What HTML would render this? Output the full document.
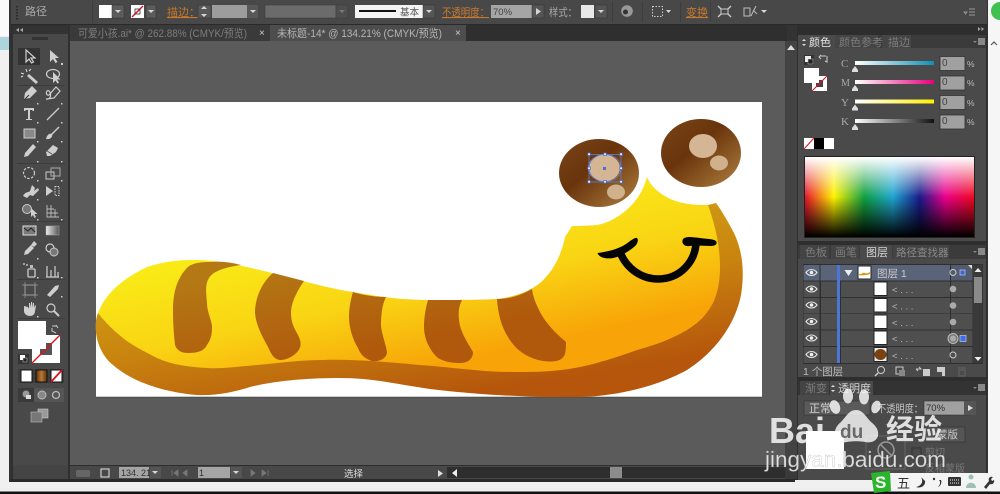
<!DOCTYPE html>
<html>
<head>
<meta charset="utf-8">
<style>
html,body{margin:0;padding:0;width:1000px;height:494px;overflow:hidden;background:#eee}
svg{display:block;filter:blur(.35px)}
text{font-family:"Liberation Sans","Noto Sans CJK SC",sans-serif;font-size:10px;fill:#c4c4c4}
.o{fill:#c9792c;font-size:11px;text-decoration:underline}
.t{fill:#aaa;font-size:11px}
.d{fill:#7d7d7d;font-size:11px}
.a{fill:#d2d2d2;font-size:11px}
.ic{fill:none;stroke:#cfcfcf;stroke-width:1.2}
.if{fill:#cfcfcf;stroke:none}
.ar{fill:#d5d5d5}
</style>
</head>
<body>
<svg width="1000" height="494" viewBox="0 0 1000 494" xmlns="http://www.w3.org/2000/svg">
<defs>
<linearGradient id="gy" gradientUnits="userSpaceOnUse" x1="340" y1="215" x2="375" y2="378"><stop offset="0" stop-color="#f9ee17"/><stop offset=".55" stop-color="#f9d414"/><stop offset="1" stop-color="#f8a408"/></linearGradient>
<linearGradient id="go" gradientUnits="userSpaceOnUse" x1="400" y1="215" x2="430" y2="400"><stop offset="0" stop-color="#d0a316"/><stop offset=".5" stop-color="#c9850f"/><stop offset="1" stop-color="#b5560c"/></linearGradient>
<linearGradient id="gs" gradientUnits="userSpaceOnUse" x1="300" y1="262" x2="320" y2="362"><stop offset="0" stop-color="#b47814"/><stop offset="1" stop-color="#b0580c"/></linearGradient>
<linearGradient id="ge1" x1="0" y1="0" x2="1" y2="1"><stop offset="0" stop-color="#7a4517"/><stop offset=".42" stop-color="#69340c"/><stop offset="1" stop-color="#b08040"/></linearGradient>
<linearGradient id="hue" x1="0" x2="1" y1="0" y2="0"><stop offset="0" stop-color="#e8112d"/><stop offset=".17" stop-color="#fff200"/><stop offset=".35" stop-color="#10a040"/><stop offset=".52" stop-color="#1fa5d0"/><stop offset=".68" stop-color="#1a1a8a"/><stop offset=".83" stop-color="#ec008c"/><stop offset="1" stop-color="#ee0a20"/></linearGradient>
<linearGradient id="wh" x1="0" x2="0" y1="0" y2="1"><stop offset="0" stop-color="#fff"/><stop offset=".5" stop-color="#fff" stop-opacity="0"/><stop offset=".5" stop-color="#000" stop-opacity="0"/><stop offset="1" stop-color="#000"/></linearGradient>
<linearGradient id="sc" x1="0" x2="1"><stop offset="0" stop-color="#fff"/><stop offset="1" stop-color="#0f8fb5"/></linearGradient>
<linearGradient id="sm" x1="0" x2="1"><stop offset="0" stop-color="#fff"/><stop offset="1" stop-color="#e6007e"/></linearGradient>
<linearGradient id="sy" x1="0" x2="1"><stop offset="0" stop-color="#fff"/><stop offset="1" stop-color="#fff000"/></linearGradient>
<linearGradient id="sk" x1="0" x2="1"><stop offset="0" stop-color="#fff"/><stop offset="1" stop-color="#111"/></linearGradient>
<linearGradient id="br" x1="0" x2="1"><stop offset="0" stop-color="#5c2f0c"/><stop offset=".5" stop-color="#b87a34"/><stop offset="1" stop-color="#5c2f0c"/></linearGradient>
<linearGradient id="tb" x1="0" x2="1" y1="0" y2="0"><stop offset="0" stop-color="#eee"/><stop offset="1" stop-color="#555"/></linearGradient>
</defs>

<!-- outside window -->
<rect width="1000" height="494" fill="#f0f0f0"/>
<rect x="0" y="0" width="10" height="36" fill="#fafafa"/>
<rect x="0" y="37" width="9" height="13" fill="#aed4de"/>
<rect x="988" y="0" width="12" height="494" fill="#f6f6f6"/>
<circle cx="1000" cy="11" r="9" fill="#3fc04f"/>
<path d="M991 45l3-3 3 3" fill="none" stroke="#555" stroke-width="1.2"/>
<rect x="0" y="491.500" width="1000" height="2.500" fill="#111"/>

<!-- window -->
<rect x="9" y="0" width="979" height="482" fill="#333"/>
<rect x="11" y="0" width="976" height="24" fill="#484848"/>
<rect x="11" y="24" width="976" height="1" fill="#2a2a2a"/>

<!-- top toolbar -->
<path d="M17 6v14" stroke="#222" stroke-width="1.5" stroke-dasharray="1.5 1.5"/>
<text x="25" y="15" class="t">路径</text>
<rect x="92" y="1" width="1" height="22" fill="#3d3d3d"/>
<rect x="99" y="5" width="13" height="13" fill="#fff"/>
<rect x="112" y="5" width="12" height="13" fill="#5c5c5c" stroke="#333" stroke-width=".5"/><path d="M115 10h6l-3 3z" class="ar"/>
<rect x="131" y="5" width="13" height="13" fill="#fff"/><path d="M132 17l11-11" stroke="#e01020" stroke-width="1.4"/><rect x="135" y="9" width="5" height="5" fill="none" stroke="#333" stroke-width=".8"/>
<rect x="146" y="5" width="10" height="13" fill="#5c5c5c" stroke="#333" stroke-width=".5"/><path d="M148 10h6l-3 3z" class="ar"/>
<text x="167" y="16" class="o">描边：</text>
<rect x="198" y="5" width="13" height="13" fill="#585858" stroke="#333" stroke-width=".5"/><path d="M201 9h6l-3-3zM201 14h6l-3 3z" class="ar"/>
<rect x="212" y="5" width="35" height="13" fill="#9c9c9c"/>
<rect x="247" y="5" width="11" height="13" fill="#585858"/><path d="M250 10h6l-3 3z" class="ar"/>
<rect x="265" y="5" width="71" height="13" fill="#6b6b6b" stroke="#3a3a3a" stroke-width=".5"/>
<rect x="336" y="5" width="12" height="13" fill="#4e4e4e" stroke="#3a3a3a" stroke-width=".5"/><path d="M339 10h6l-3 3z" fill="#777"/>
<rect x="355" y="5" width="68" height="13" fill="#f4f4f4"/><rect x="359" y="10" width="37" height="2" fill="#111"/>
<text x="400" y="15.500" style="font-size:9.500px;fill:#555">基本</text>
<rect x="423" y="5" width="12" height="13" fill="#555" stroke="#333" stroke-width=".5"/><path d="M426 10h6l-3 3z" class="ar"/>
<text x="442" y="16" class="o" textLength="47" lengthAdjust="spacingAndGlyphs">不透明度：</text>
<rect x="491" y="5" width="41" height="13" fill="#a5a5a5"/><text x="493" y="15" style="font-size:9.500px;fill:#444">70%</text>
<rect x="532" y="5" width="12" height="13" fill="#555" stroke="#333" stroke-width=".5"/><path d="M536 8l5 3.500-5 3.500z" class="ar"/>
<text x="549" y="16" class="t" textLength="28" lengthAdjust="spacingAndGlyphs">样式：</text>
<rect x="581" y="5" width="13" height="13" fill="#e8e8e8"/><rect x="595" y="5" width="12" height="13" fill="#555" stroke="#333" stroke-width=".5"/><path d="M598 10h6l-3 3z" class="ar"/>
<rect x="612" y="2" width="1" height="20" fill="#3d3d3d"/>
<circle cx="627" cy="11" r="5.800" fill="#999"/><circle cx="625.500" cy="12" r="2.500" fill="#333"/>
<rect x="642" y="2" width="1" height="20" fill="#3d3d3d"/>
<rect x="652.500" y="6.500" width="10" height="10" fill="none" stroke="#ccc" stroke-dasharray="1.500 1.500"/><path d="M666 10h5l-2.500 3z" class="ar"/>
<rect x="680" y="2" width="1" height="20" fill="#3d3d3d"/>
<text x="686" y="16" class="o">变换</text>
<rect x="710" y="2" width="1" height="20" fill="#3d3d3d"/>
<path d="M718 6l3 3M731 6l-3 3M718 17l3-3M731 17l-3-3" stroke="#ccc" fill="none" stroke-width="1.300"/><rect x="721" y="9" width="7" height="5" fill="none" stroke="#ccc"/>
<path d="M744 8h6v8h-6zM751 16l5-10M753 10l4 4" stroke="#bbb" fill="none"/><path d="M761 10h6l-3 3z" class="ar"/>
<path d="M964 12h3l-1.500 2zM969 9h6M969 12h6M969 15h6" stroke="#999" stroke-width=".9" fill="none"/>

<!-- tab strip -->
<rect x="70" y="25" width="717" height="16" fill="#2f2f2f"/>
<rect x="70" y="25" width="200" height="16" fill="#3a3a3a"/>
<rect x="270" y="25" width="196" height="16" fill="#4d4d4d"/>
<text x="78" y="37" class="d" textLength="169" lengthAdjust="spacingAndGlyphs">可爱小孩.ai* @ 262.88% (CMYK/预览)</text>
<text x="259" y="36" style="font-size:10px;fill:#ccc">×</text>
<text x="277" y="37" style="font-size:11px;fill:#b5b5b5" textLength="165" lengthAdjust="spacingAndGlyphs">未标题-14* @ 134.21% (CMYK/预览)</text>
<text x="455" y="36" style="font-size:10px;fill:#ccc">×</text>

<!-- doc -->
<rect x="70" y="41" width="717" height="425" fill="#5b5b5b"/>
<rect x="785" y="41" width="12" height="425" fill="#434343"/>
<path d="M787 50l4-5 4 5z" fill="#ddd"/>
<rect x="96" y="102" width="666" height="295" fill="#fff"/>
<rect x="96" y="396.500" width="666" height="1" fill="#333" opacity=".5"/>

<!-- caterpillar -->
<path fill="url(#go)" d="M98 313C96 318 95 325 96 332C97 345 104 358 113 365C130 380 160 392 197 395C215 396 235 392 250 387C270 382 300 378 340 378C375 378 400 385 430 389C470 394 530 398 580 397C620 396 660 385 687 370C715 352 735 325 741 295C745 270 742 250 734 233C728 222 722 211 716 203L708 205L690 300L400 340L200 340Z"/>
<path fill="url(#gy)" d="M98 313C105 295 120 280 147 267C165 261 180 260 195 260C225 260 260 270 303 281C325 287 345 291 353 292C375 296 400 300 430 300C450 300 480 300 497 299C515 297 535 290 545 278C555 268 562 252 565 237L572 226C585 226 597 225 597 225C615 222 640 205 647 177C652 190 668 200 683 203C692 205 700 205 708 205C715 225 720 245 720 267C720 285 716 297 713 303C705 318 695 325 687 330C670 340 655 345 637 350C615 358 595 364 580 367C555 372 535 372 513 372C480 372 450 367 420 365C390 362 350 359 323 360C300 360 280 363 257 365C235 367 220 369 207 368C190 367 172 365 157 358C145 352 133 346 123 338C113 330 105 322 98 313Z"/>
<g fill="url(#gs)">
<path d="M241 265C230 262 220 261 210 262C197 262 190 264 186 269C176 280 173 295 173 310C173 325 174 335 175 345C177 351 182 353 188 353C198 353 204 351 207 345C212 338 212 332 212 326C211 318 207 312 207 303C206 292 205 284 209 278C213 271 226 267 241 265Z"/>
<path d="M273 273C262 282 255 298 255 313C256 325 262 336 268 347C271 353 273 359 280 360C288 360 295 355 298 351C302 346 301 341 298 335C294 328 291 322 291 313C291 303 297 291 304 281Z"/>
<path d="M353 292C350 302 349 310 349 317C349 328 353 340 358 348C361 356 366 359 372 361C380 362 387 358 387 352C386 345 382 335 381 326C381 315 382 305 386 297C375 297 362 295 353 292Z"/>
<path d="M428 300C425 310 424 320 424 327C424 340 431 352 438 358C445 362 452 363 460 363C469 363 473 358 473 352C468 343 460 332 459 320C458 312 459 306 462 300Z"/>
<path d="M497 299C498 313 501 326 508 337C515 349 526 358 543 361C553 362 562 362 565 354C566 349 566 345 566 342C555 333 545 322 540 312C536 304 533 297 532 289C520 296 508 299 497 299Z"/>
</g>
<!-- eyes -->
<ellipse cx="599" cy="173" rx="40" ry="34" fill="url(#ge1)"/>
<ellipse cx="701" cy="153" rx="40" ry="34" fill="url(#ge1)"/>
<ellipse cx="604" cy="168" rx="16" ry="13.500" fill="#d4b695"/>
<ellipse cx="616" cy="192" rx="9" ry="7.500" fill="#d1b08c"/>
<ellipse cx="703" cy="146" rx="14" ry="12" fill="#d4b695"/>
<ellipse cx="719" cy="163" rx="9" ry="7.500" fill="#d1b08c"/>
<!-- selection -->
<g fill="none" stroke="#5b7fd8" stroke-width=".8"><rect x="589" y="154.500" width="32" height="27.500"/><ellipse cx="605" cy="168" rx="16" ry="13.700"/></g>
<g fill="#fff" stroke="#4a6fd0" stroke-width=".8"><rect x="587.800" y="153" width="2.500" height="2.500"/><rect x="603.800" y="153" width="2.500" height="2.500"/><rect x="619.800" y="153" width="2.500" height="2.500"/><rect x="587.800" y="167" width="2.500" height="2.500"/><rect x="619.800" y="167" width="2.500" height="2.500"/><rect x="587.800" y="180.500" width="2.500" height="2.500"/><rect x="603.800" y="180.500" width="2.500" height="2.500"/><rect x="619.800" y="180.500" width="2.500" height="2.500"/></g>
<rect x="603" y="167" width="3" height="3" fill="#4a6fd0"/>
<!-- smile -->
<path d="M620 252C627 270 643 279 658 279C680 279 695 262 696 243" fill="none" stroke="#050505" stroke-width="7.500"/>
<path d="M597.500 253C605 252 617 250 626 244C630 241 635 237 637 238C639 240 637 245 634 247C628 252 622 255 617 257C608 260 599 258 597.500 253Z" fill="#050505"/>
<path d="M683 239C686 236 692 237 700 238C707 239 714 239 716 241C718 244 715 246 711 246C704 246 696 245 690 246C684 247 681 243 683 239Z" fill="#050505"/>

<!-- tools panel -->
<rect x="11" y="25" width="59" height="457" fill="#303030"/>
<rect x="13" y="34" width="55" height="431" fill="#494949"/>
<rect x="13" y="465" width="55" height="14" fill="#444"/>
<rect x="13" y="26" width="55" height="8" fill="#333"/>
<path d="M16 30l3-2v4zM20 30l3-2v4z" fill="#aaa"/>
<rect x="32" y="37" width="16" height="3" fill="#333"/>
<rect x="18" y="48" width="22" height="17" fill="#333"/>
<g>
<path class="ic" d="M26 50v12l3-3 2.500 4 2-1-2.500-4h4z"/>
<path class="if" d="M50 50v12l3-3 2.500 4 2-1-2.500-4h4z"/><rect x="61" y="63" width="2" height="2" fill="#ccc"/>
<path class="if" d="M36 84l-9-8 2-2 9 8z"/><path d="M27 72l-1-3M24 74l-3-1M29 71l2-2M23 76l-2 1" stroke="#ddd"/>
<ellipse cx="53" cy="74" rx="6.500" ry="4.500" class="ic"/><path class="if" d="M53 72v11l2.500-2.500 2 3 1.500-1-2-3h3.500z"/>
<path class="if" d="M24 99l1-6 7-7 5 5-7 7z"/><path d="M24 100l5-5" stroke="#333"/>
<path class="ic" d="M46 99c6 1 5-7 3-8-3-2-4 5 0 4l7-8 4 4-6 7-7 1"/>
<path class="if" d="M24 108h10v3h-1l-1-1h-2v9h2v1h-6v-1h2v-9h-2l-1 1h-1z"/>
<path d="M47 120l12-12" stroke="#ccc" stroke-width="1.300"/>
<rect x="24" y="129" width="11" height="9" fill="#8a8a8a" stroke="#ccc"/>
<path d="M59 127l-8 8" stroke="#ccc" stroke-width="1.500"/><path class="if" d="M46 139c1-4 3-6 6-5 1 2-1 6-6 5z"/>
<path class="if" d="M24 157l1-4 8-9 3 3-8 9z"/>
<path class="if" d="M46 152l7-7 5 3-2 4-6 4h-3z"/><path d="M47 151l5 3" stroke="#555"/>
<circle cx="29" cy="173" r="5.500" fill="none" stroke="#ccc" stroke-width="1.200" stroke-dasharray="2.500 1.500"/>
<rect x="46" y="172" width="8" height="7" fill="none" stroke="#ccc"/><rect x="51" y="168" width="9" height="8" fill="none" stroke="#aaa"/>
<path class="if" d="M23 196c3-5 5-3 7-5l2-6 3 3-1 3 4-3 1 2-6 6-3-1-3 3z"/>
<path class="if" d="M46 186l7 5-7 5z"/><rect x="55" y="186.500" width="4" height="9" fill="none" stroke="#ccc" stroke-dasharray="1.500 1"/>
<circle cx="27" cy="209" r="4.500" fill="#777" stroke="#ccc"/><path class="if" d="M31 208v9l2-2 1.500 3 1.500-1-1.500-3h3z"/>
<path d="M47 205v12h12M47 209h7M47 213h11M51 205v12M55 209v8" stroke="#bbb" fill="none" stroke-width=".9"/>
<rect x="23" y="226" width="13" height="9" fill="#7a7a7a" stroke="#ddd"/><path d="M24 228l4 3 3-3 4 4" stroke="#222" fill="none"/>
<rect x="46" y="226" width="13" height="9" fill="url(#tb)" stroke="#aaa" stroke-width=".5"/>
<path class="if" d="M24 255l1-4 6-6 3 3-6 6zM31 245l3-4 3 3-3 3z"/>
<circle cx="50" cy="248" r="4" class="ic"/><circle cx="54" cy="252" r="4" fill="#777" stroke="#ccc"/>
<rect x="28" y="269" width="7" height="8" rx="1" fill="none" stroke="#ccc" stroke-width="1.300"/><rect x="30" y="265" width="3" height="3" fill="#bbb"/><circle cx="24" cy="264" r="1" fill="#bbb"/><circle cx="27" cy="265" r="1" fill="#bbb"/>
<path d="M47 266v11M51 270v7M55 266v11M58 272v5M46 277h13" stroke="#ccc" stroke-width="1.200"/>
<rect x="25" y="285" width="10" height="10" fill="none" stroke="#aaa"/><path d="M25 282v16M35 282v16M22 285h16M22 295h16" stroke="#999" stroke-width=".7"/>
<path class="if" d="M47 295l8-9 4-1-1 4-8 8z"/>
<path class="if" d="M24 306v5c0 3 3 5 6 5s5-2 5-5l1-5-1-1-1 3v-5h-1v5l-1-6h-1v6l-1-5h-1v6l-1-2z"/>
<circle cx="51" cy="308" r="4" class="ic" stroke-width="1.500"/><path d="M54 311l5 5" stroke="#ccc" stroke-width="2"/>
</g>
<g fill="#ccc"><rect x="37" y="103" width="1.500" height="1.500"/><rect x="61" y="103" width="1.500" height="1.500"/><rect x="37" y="122" width="1.500" height="1.500"/><rect x="61" y="122" width="1.500" height="1.500"/><rect x="37" y="141" width="1.500" height="1.500"/><rect x="61" y="141" width="1.500" height="1.500"/><rect x="37" y="161" width="1.500" height="1.500"/><rect x="61" y="161" width="1.500" height="1.500"/><rect x="37" y="180" width="1.500" height="1.500"/><rect x="61" y="180" width="1.500" height="1.500"/><rect x="37" y="199" width="1.500" height="1.500"/><rect x="37" y="219" width="1.500" height="1.500"/><rect x="61" y="219" width="1.500" height="1.500"/><rect x="37" y="258" width="1.500" height="1.500"/><rect x="37" y="277" width="1.500" height="1.500"/><rect x="61" y="277" width="1.500" height="1.500"/><rect x="61" y="296" width="1.500" height="1.500"/><rect x="37" y="316" width="1.500" height="1.500"/></g>
<g fill="#3c3c3c"><rect x="17" y="85" width="48" height="1"/><rect x="17" y="163" width="48" height="1"/><rect x="17" y="221" width="48" height="1"/><rect x="17" y="279" width="48" height="1"/><rect x="17" y="318" width="48" height="1"/></g>
<!-- fill / stroke -->
<rect x="32" y="335" width="28" height="28" fill="#fff"/><rect x="40" y="343" width="12" height="12" fill="#555"/>
<path d="M32 363l28-28" stroke="#e01020" stroke-width="1.300"/>
<rect x="18" y="321" width="28" height="28" fill="#fff"/>
<path d="M52 326h5M58 328l-2-3M52 328v3l4 2" stroke="#ccc" fill="none"/>
<rect x="18" y="354" width="11" height="10" fill="#333"/><rect x="20" y="355" width="5" height="5" fill="#fff"/><rect x="23" y="358" width="4" height="4" fill="#222" stroke="#ccc" stroke-width=".5"/>
<rect x="18" y="369" width="46" height="14" fill="#3e3e3e"/>
<rect x="21" y="370" width="11" height="12" fill="#fff" stroke="#111"/>
<rect x="36" y="370" width="11" height="12" fill="url(#br)" stroke="#111"/>
<rect x="51" y="370" width="11" height="12" fill="#fff" stroke="#111"/><path d="M51 382l11-12" stroke="#e01020" stroke-width="1.800"/>
<rect x="18" y="388" width="46" height="14" fill="#555"/><rect x="18" y="388" width="16" height="14" fill="#3a3a3a"/>
<circle cx="26" cy="394" r="3.500" fill="#999"/><rect x="26" y="395" width="5" height="4" fill="#ddd"/>
<circle cx="42" cy="395" r="4" fill="#888" stroke="#bbb"/><circle cx="56" cy="395" r="3.500" fill="none" stroke="#bbb" stroke-width="1.300"/>
<rect x="38" y="409" width="10" height="9" fill="#999" stroke="#ccc" stroke-width=".6"/><rect x="31" y="412" width="11" height="10" fill="#777" stroke="#bbb" stroke-width=".6"/>

<!-- status bar -->
<rect x="70" y="466" width="717" height="13" fill="#484848"/>
<rect x="70" y="465" width="717" height="1" fill="#2e2e2e"/>
<rect x="10" y="479" width="788" height="3" fill="#2a2a2a"/>
<rect x="76" y="470" width="14" height="7" rx="1.500" fill="#666"/>
<rect x="101" y="469" width="8" height="8" fill="none" stroke="#ccc" stroke-width="1.200"/>
<rect x="119" y="467" width="30" height="11" fill="#a5a5a5"/><text x="121" y="476" style="font-size:9px;fill:#333">134. 21</text>
<rect x="150" y="467" width="11" height="11" fill="#555"/><path d="M152 471h6l-3 3z" class="ar"/>
<path d="M172 470v6M178 470l-4 3 4 3zM187 470l-4 3 4 3z" fill="#777" stroke="#777" stroke-width=".8"/>
<rect x="198" y="467" width="32" height="11" fill="#a5a5a5"/><text x="199" y="476" style="font-size:9px;fill:#333">1</text>
<rect x="231" y="467" width="11" height="11" fill="#555"/><path d="M233 471h6l-3 3z" class="ar"/>
<path d="M251 470l4 3-4 3zM262 470l4 3-4 3zM268 470v6" fill="#777" stroke="#777" stroke-width=".8"/>
<text x="344" y="477" style="font-size:9.500px;fill:#ddd">选择</text>
<path d="M438 470l5 3.500-5 3.500z" fill="#ddd"/>
<rect x="447" y="467" width="340" height="11" fill="#2e2e2e"/>
<path d="M457 469v8l-5-4z" fill="#eee"/>
<rect x="610" y="467" width="12" height="11" fill="#8c8c8c"/>
<rect x="785" y="466" width="13" height="13" fill="#3a3a3a"/>

<!-- right panels -->
<rect x="797" y="25" width="190" height="457" fill="#2e2e2e"/>
<path d="M978 27l2.500 2-2.500 2zM981.500 27l2.500 2-2.500 2z" fill="#aaa"/>
<rect x="798" y="35" width="188" height="206" fill="#4a4a4a"/>
<rect x="798" y="35" width="188" height="13" fill="#3b3b3b"/>
<rect x="798" y="35" width="37" height="14" fill="#4a4a4a"/>
<rect x="835" y="35" width="43" height="13" fill="#454545"/>
<rect x="882" y="35" width="29" height="13" fill="#454545"/>
<path d="M802 41l2-2 2 2zM802 44l2 2 2-2z" fill="#ddd"/>
<text x="809" y="46" style="font-size:11px;fill:#e6e6e6">颜色</text>
<text x="839" y="46" class="d">颜色参考</text>
<text x="888" y="46" class="d">描边</text>
<path d="M973 41h4l-2 2zM978 38h7v7h-7z" fill="#888"/>
<!-- colour panel -->
<rect x="804" y="55" width="10" height="10" fill="#333"/><rect x="805" y="56" width="6" height="6" fill="#eee"/><rect x="808" y="59" width="5" height="5" fill="#222" stroke="#ccc" stroke-width=".5"/>
<path d="M820 56h6M821 55l-2 2 2 2M827 56v6l-2-1" fill="none" stroke="#ccc"/>
<rect x="812" y="76" width="15" height="15" fill="#fff"/><rect x="816" y="80" width="7" height="7" fill="#444"/><path d="M812 91l15-15" stroke="#e01020" stroke-width="1.100"/>
<rect x="804" y="68" width="15" height="15" fill="#fff"/>
<g><text x="841" y="67" style="font-family:'Liberation Serif',serif;font-size:11px;fill:#aaa">C</text><text x="841" y="86" style="font-family:'Liberation Serif',serif;font-size:10px;fill:#aaa">M</text><text x="841" y="106" style="font-family:'Liberation Serif',serif;font-size:11px;fill:#aaa">Y</text><text x="841" y="125" style="font-family:'Liberation Serif',serif;font-size:11px;fill:#aaa">K</text></g>
<rect x="855" y="61" width="79" height="4" fill="url(#sc)"/><rect x="855" y="80" width="79" height="4" fill="url(#sm)"/><rect x="855" y="99.500" width="79" height="4" fill="url(#sy)"/><rect x="855" y="119" width="79" height="4" fill="url(#sk)"/>
<g fill="#ddd"><path d="M852 70l3-4 3 4v2h-6z"/><path d="M852 89l3-4 3 4v2h-6z"/><path d="M852 108.500l3-4 3 4v2h-6z"/><path d="M852 128l3-4 3 4v2h-6z"/></g>
<g fill="#a0a0a0" stroke="#333" stroke-width=".8"><rect x="940" y="56.500" width="25" height="14"/><rect x="940" y="76" width="25" height="14"/><rect x="940" y="95.500" width="25" height="14"/><rect x="940" y="115" width="25" height="14"/></g>
<g><text x="942" y="66" style="fill:#444;font-size:10px">0</text><text x="942" y="85" style="fill:#444;font-size:10px">0</text><text x="942" y="105" style="fill:#444;font-size:10px">0</text><text x="942" y="124" style="fill:#444;font-size:10px">0</text>
<text x="967" y="67" style="fill:#bbb;font-size:8.500px">%</text><text x="967" y="86" style="fill:#bbb;font-size:8.500px">%</text><text x="967" y="106" style="fill:#bbb;font-size:8.500px">%</text><text x="967" y="125" style="fill:#bbb;font-size:8.500px">%</text></g>
<rect x="804" y="138" width="10" height="11" fill="#fff"/><path d="M804 149l10-11" stroke="#e01020"/>
<rect x="814" y="138" width="10" height="11" fill="#000"/><rect x="824" y="138" width="10" height="11" fill="#fff"/>
<rect x="805" y="157" width="169" height="80" fill="url(#hue)"/><rect x="805" y="157" width="169" height="80" fill="url(#wh)"/>
<rect x="804.500" y="156.500" width="170" height="81" fill="none" stroke="#222"/>

<!-- layers panel -->
<rect x="798" y="245" width="188" height="132" fill="#4a4a4a"/>
<rect x="798" y="245" width="188" height="14" fill="#3b3b3b"/>
<rect x="800" y="245" width="29" height="14" fill="#444"/><rect x="831" y="245" width="28" height="14" fill="#444"/><rect x="860" y="245" width="32" height="15" fill="#4a4a4a"/><rect x="893" y="245" width="56" height="14" fill="#444"/>
<text x="805" y="256" class="d">色板</text><text x="835" y="256" class="d">画笔</text><text x="866" y="256" style="font-size:11px;fill:#d5d5d5">图层</text><text x="896" y="256" style="font-size:10.500px;fill:#8a8a8a">路径查找器</text>
<path d="M973 251h4l-2 2zM978 248h7v7h-7z" fill="#888"/>
<rect x="803" y="264" width="180" height="100" fill="#2f2f2f"/>
<g fill="#4f4f4f"><rect x="803.500" y="265" width="169" height="15.500"/><rect x="803.500" y="281.500" width="169" height="15.500"/><rect x="803.500" y="298" width="169" height="15.500"/><rect x="803.500" y="314" width="169" height="15.500"/><rect x="803.500" y="330.500" width="169" height="15.500"/><rect x="803.500" y="347" width="169" height="16"/></g>
<rect x="820" y="265" width="130" height="15.500" fill="#5a6478"/>
<rect x="803.500" y="265" width="16" height="15.500" fill="#5a6478"/>
<rect x="950" y="265" width="22.500" height="15.500" fill="#535c6e"/>
<g fill="#2f2f2f"><rect x="820" y="281" width="1" height="82"/><rect x="840" y="281" width="1" height="82"/><rect x="950" y="265" width="1" height="98"/><rect x="819.500" y="265" width="1" height="98"/></g>
<rect x="837" y="265" width="3" height="98" fill="#4a76d8"/>
<g fill="none" stroke="#e6e6e6" stroke-width="1.100"><path d="M806 272.500c3-4 8-4 11 0c-3 4-8 4-11 0zM806 289c3-4 8-4 11 0c-3 4-8 4-11 0zM806 305c3-4 8-4 11 0c-3 4-8 4-11 0zM806 321.500c3-4 8-4 11 0c-3 4-8 4-11 0zM806 338c3-4 8-4 11 0c-3 4-8 4-11 0zM806 354.500c3-4 8-4 11 0c-3 4-8 4-11 0z"/></g>
<g fill="#eee"><circle cx="811.500" cy="272.500" r="1.800"/><circle cx="811.500" cy="289" r="1.800"/><circle cx="811.500" cy="305" r="1.800"/><circle cx="811.500" cy="321.500" r="1.800"/><circle cx="811.500" cy="338" r="1.800"/><circle cx="811.500" cy="354.500" r="1.800"/></g>
<path d="M844.500 270h8l-4 6z" fill="#eee"/>
<rect x="858" y="266" width="13" height="13" fill="#fff" stroke="#222"/><path d="M859 274c4 0 4-2 6-1s3 0 5-1l0 2c-3 1-8 2-11 1z" fill="#d9960f"/>
<g fill="#fff" stroke="#222"><rect x="874" y="282" width="13" height="13.500"/><rect x="874" y="298.500" width="13" height="13.500"/><rect x="874" y="315" width="13" height="13.500"/><rect x="874" y="331" width="13" height="13.500"/></g>
<rect x="874" y="347.500" width="13" height="14" fill="#eee" stroke="#222"/><ellipse cx="880.500" cy="354.500" rx="6" ry="5.500" fill="#7a4213"/>
<text x="877" y="277" style="font-size:10.500px;fill:#ccc">图层 1</text>
<g><text x="892" y="293" style="fill:#bbb;font-size:9.500px">&lt; . . .</text><text x="892" y="309.500" style="fill:#bbb;font-size:9.500px">&lt; . . .</text><text x="892" y="326" style="fill:#bbb;font-size:9.500px">&lt; . . .</text><text x="892" y="342" style="fill:#bbb;font-size:9.500px">&lt; . . .</text><text x="892" y="359" style="fill:#bbb;font-size:9.500px">&lt; . . .</text></g>
<circle cx="953" cy="272.500" r="3" fill="none" stroke="#ccc"/><rect x="960" y="270" width="5" height="5" fill="#3a66e0" stroke="#ddd" stroke-width=".6"/>
<circle cx="953" cy="289" r="3.300" fill="#aaa"/><circle cx="953" cy="305.500" r="3.300" fill="#aaa"/><circle cx="953" cy="322" r="3.300" fill="#aaa"/>
<circle cx="953" cy="338.500" r="5" fill="#777" stroke="#bbb"/><circle cx="953" cy="338.500" r="3" fill="#aaa"/><rect x="960" y="335.500" width="6" height="6" fill="#3a70f0" stroke="#ddd" stroke-width=".6"/>
<circle cx="953" cy="355" r="3" fill="none" stroke="#ccc"/>
<path d="M968 265l4 0v4z" fill="#ddd"/>
<rect x="973" y="265" width="9.500" height="98" fill="#3a3a3a"/><rect x="974" y="277" width="8" height="26" fill="#8a8a8a"/><path d="M974.500 272l3.500-4 3.500 4zM974.500 357l3.500 4 3.500-4z" fill="#eee"/>
<text x="803" y="375" style="font-size:10.500px;fill:#bbb">1 个图层</text>
<circle cx="881" cy="370" r="3.500" fill="none" stroke="#ccc"/><path d="M878 373l-3 3" stroke="#ccc" stroke-width="1.500"/>
<rect x="896" y="367" width="7" height="7" fill="none" stroke="#ccc"/><rect x="899" y="370" width="6" height="6" fill="#888"/>
<path d="M916 369h5l-2-2M916 369l2 2" stroke="#ccc" fill="none"/><rect x="923" y="369" width="7" height="7" fill="#ccc"/>
<path d="M937 367h8v9h-3v-4h-5z" fill="#ccc"/>
<path d="M958 368h8M959 370h6v6h-6z" fill="none" stroke="#666"/>

<!-- transparency panel -->
<rect x="798" y="381" width="188" height="99" fill="#4a4a4a"/>
<rect x="798" y="381" width="188" height="14" fill="#333"/>
<rect x="800" y="381" width="29" height="14" fill="#444"/><rect x="830" y="381" width="43" height="15" fill="#4a4a4a"/>
<text x="805" y="392" class="d">渐变</text><text x="838" y="392" style="font-size:11px;fill:#d0d0d0">透明度</text>
<path d="M831 387l2-2 2 2zM831 390l2 2 2-2z" fill="#ddd"/>
<path d="M973 387h4l-2 2zM978 384h7v7h-7z" fill="#888"/>
<rect x="804" y="401" width="66" height="14" fill="#5a5a5a" stroke="#333" stroke-width=".6"/>
<text x="809" y="412" class="a">正常</text>
<text x="877" y="412" style="font-size:10.500px;fill:#c4c4c4" textLength="46" lengthAdjust="spacingAndGlyphs">不透明度：</text>
<rect x="924" y="401" width="45" height="14" fill="#a0a0a0" stroke="#333" stroke-width=".6"/>
<text x="926" y="411" style="font-size:9.500px;fill:#333">70%</text>
<rect x="964" y="401" width="12" height="14" fill="#555"/><path d="M968 405l5 3-5 3z" fill="#ddd"/>
<rect x="925" y="427" width="40" height="15" fill="#555" stroke="#333" stroke-width=".6"/>
<text x="937" y="438" style="font-size:10.500px;fill:#ccc">蒙版</text>
<rect x="806" y="431" width="38" height="38" fill="#fff"/>
<rect x="866" y="436" width="39" height="33" fill="none" stroke="#666"/>
<circle cx="886" cy="450" r="8" fill="none" stroke="#999" stroke-width="1.500"/><path d="M880 444l12 12" stroke="#999" stroke-width="1.500"/>
<rect x="912" y="448" width="9" height="9" fill="none" stroke="#333"/>
<text x="925" y="456" style="font-size:10px;fill:#777">剪切</text>
<text x="925" y="472" style="font-size:10px;fill:#777">反相蒙版</text>

<!-- watermark -->
<g fill="#fff" opacity=".8">
<ellipse cx="835" cy="407" rx="5" ry="7" transform="rotate(-20 835 407)"/><ellipse cx="848" cy="396" rx="5" ry="7.500"/><ellipse cx="864" cy="397" rx="5" ry="7.500"/><ellipse cx="876" cy="407" rx="4.500" ry="6.500" transform="rotate(20 876 407)"/>
<path d="M856 410c-7 0-10 7-15 12-5 4-7 9-6 14 2 6 8 7 12 6 5-1 13-1 18 0 5 1 11 0 13-6 1-6-2-10-7-14-5-5-8-12-15-12z"/>
</g>
<text x="769" y="443" style="font-size:36px;font-weight:bold;fill:#fff;opacity:.82">Bai</text>
<text x="840" y="438" style="font-size:19px;font-weight:bold;fill:#555;opacity:.85">du</text>
<text x="886" y="439" style="font-size:28px;font-weight:bold;fill:#fff;opacity:.82">经验</text>
<text x="765" y="467" style="font-size:22px;fill:#fff;opacity:.82;stroke:#888;stroke-width:.25" textLength="181" lengthAdjust="spacingAndGlyphs">jingyan.baidu.com</text>

<!-- IME bar -->
<rect x="795" y="480" width="193" height="11" fill="#f0f0f0"/>
<rect x="872" y="473" width="128" height="18" fill="#f4f4f4"/>
<path d="M871 473l19-2 1 20-17 2z" fill="#2bb52b"/>
<text x="875" y="488" style="font-size:17px;font-weight:bold;fill:#fff">S</text>
<text x="897" y="488" style="font-size:13px;fill:#333">五</text>
<path d="M921 477c3 5 0 9-5 10 5 2 10-2 9-6z" fill="#333"/>
<circle cx="934" cy="479" r="1.200" fill="#333"/><path d="M939 480c2 2 1 5-1 7 3-1 4-5 3-7z" fill="#333"/>
<rect x="948" y="477" width="13" height="9" rx="1" fill="#333"/><path d="M950 480h9M950 483h9" stroke="#eee" stroke-dasharray="1 1"/>
<circle cx="971" cy="477" r="2.500" fill="#9fc0b8"/><path d="M966 488c0-7 10-7 10 0z" fill="#9fc0b8"/>
<path d="M984 487l5-6c-1-3 1-5 4-4l-2 2 1 2 2-1c1 3-2 5-4 4l-4 5z" fill="#333"/>
</svg>
</body>
</html>
